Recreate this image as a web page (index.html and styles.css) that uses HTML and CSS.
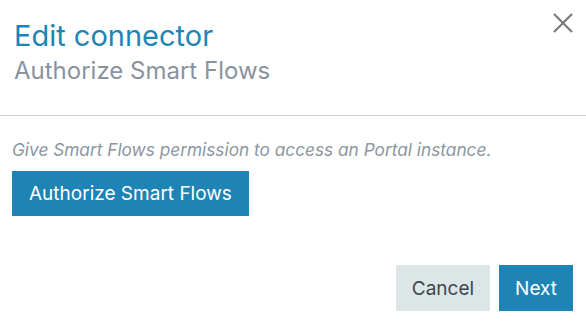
FILE: index.html
```html
<!DOCTYPE html>
<html lang="en">
  <head>
    <meta charset="UTF-8" />
    <meta name="viewport" content="width=device-width, initial-scale=1.0" />
    <title>Edit connector</title>
    <link rel="stylesheet" href="styles.css">
  </head>
  <body>
    <div class="modal">
      <div class="modal-header">
        <div class="titles">
          <h1 class="title">Edit connector</h1>
          <h2 class="subtitle">Authorize Smart Flows</h2>
        </div>
        <button class="close-btn" aria-label="Close">
          <svg viewBox="0 0 20 20">
            <path d="M1 1L19 19M19 1L1 19" />
          </svg>
        </button>
      </div>
      <div class="modal-body">
        <p class="hint">Give Smart Flows permission to access an Portal instance.</p>
        <button class="btn btn-primary">Authorize Smart Flows</button>
      </div>
      <div class="modal-footer">
        <button class="btn btn-secondary">Cancel</button>
        <button class="btn btn-primary">Next</button>
      </div>
    </div>
  </body>
</html>
```

FILE: styles.css
```css
body {
    margin: 0;
    font-family: Inter, "Noto Sans", sans-serif;
    background-color: #fff;
}
.modal {
    width: 586px;
    height: 321px;
    display: flex;
    flex-direction: column;
}
.modal-header {
    display: flex;
    justify-content: space-between;
    align-items: flex-start;
    padding: 20px 13px 31px 14px;
    border-bottom: 1px solid #cfcfcf;
}
.title {
    margin: 0;
    font-size: 29px;
    line-height: 32px;
    font-weight: 400;
    color: #1e84b5;
}
.subtitle {
    margin: 6px 0 0;
    font-size: 24px;
    line-height: 26px;
    font-weight: 400;
    color: #8993a0;
}
.close-btn {
    background: none;
    border: none;
    padding: 0;
    margin-top: -7px;
    cursor: pointer;
    width: 20px;
    height: 20px;
}
.close-btn svg {
    width: 20px;
    height: 20px;
    stroke: #767676;
    stroke-width: 2;
    fill: none;
}
.modal-body {
    padding: 24px 12px 0;
}
.hint {
    margin: 0 0 11px;
    font-size: 17.25px;
    line-height: 20px;
    font-style: italic;
    color: #8b96a2;
}
.btn {
    font-family: Inter, "Noto Sans", sans-serif;
    font-size: 19px;
    height: 45px;
    padding: 0 17px;
    border: none;
    border-radius: 0;
    cursor: pointer;
}
.btn-primary {
    background-color: #1e84b5;
    color: #fff;
}
.btn-secondary {
    background-color: #dde6e7;
    color: #3b4550;
}
.modal-footer {
    display: flex;
    justify-content: flex-end;
    gap: 9px;
    padding: 49px 13px 0;
}
.modal-footer .btn {
    height: 46px;
    padding: 0 16px;
}
```
